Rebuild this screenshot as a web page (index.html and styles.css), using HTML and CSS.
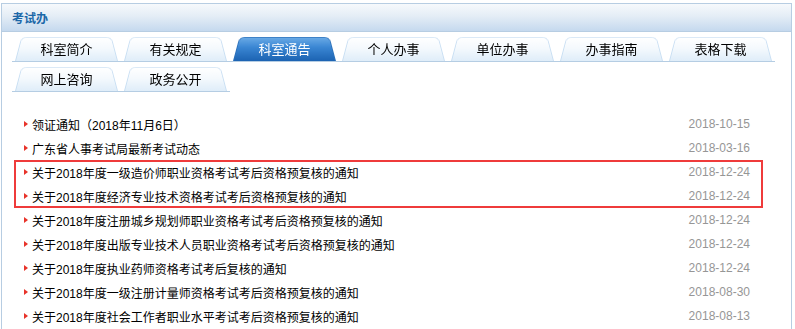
FILE: index.html
```html
<!DOCTYPE html>
<html lang="zh-CN">
<head>
    <meta charset="UTF-8">
    <meta name="viewport" content="width=device-width, initial-scale=1.0">
    <title>考试办</title>
    <link rel="stylesheet" href="styles.css">
</head>
<body>
    <div class="painel">
        <div class="painel-topo">
            <h2>考试办</h2>
        </div>
        <div class="painel-corpo">
            <div class="abas">
                <a class="aba" href="#">科室简介</a>
                <a class="aba" href="#">有关规定</a>
                <a class="aba ativa" href="#">科室通告</a>
                <a class="aba" href="#">个人办事</a>
                <a class="aba" href="#">单位办事</a>
                <a class="aba" href="#">办事指南</a>
                <a class="aba" href="#">表格下载</a>
            </div>
            <div class="abas">
                <a class="aba" href="#">网上咨询</a>
                <a class="aba" href="#">政务公开</a>
            </div>

            <ul class="lista">
                <li class="item"><a href="#">领证通知（2018年11月6日）</a><span>2018-10-15</span></li>
                <li class="item"><a href="#">广东省人事考试局最新考试动态</a><span>2018-03-16</span></li>
                <li class="destaque">
                    <ul class="lista">
                        <li class="item"><a href="#">关于2018年度一级造价师职业资格考试考后资格预复核的通知</a><span>2018-12-24</span></li>
                        <li class="item"><a href="#">关于2018年度经济专业技术资格考试考后资格预复核的通知</a><span>2018-12-24</span></li>
                    </ul>
                </li>
                <li class="item"><a href="#">关于2018年度注册城乡规划师职业资格考试考后资格预复核的通知</a><span>2018-12-24</span></li>
                <li class="item"><a href="#">关于2018年度出版专业技术人员职业资格考试考后资格预复核的通知</a><span>2018-12-24</span></li>
                <li class="item"><a href="#">关于2018年度执业药师资格考试考后复核的通知</a><span>2018-12-24</span></li>
                <li class="item"><a href="#">关于2018年度一级注册计量师资格考试考后资格预复核的通知</a><span>2018-08-30</span></li>
                <li class="item"><a href="#">关于2018年度社会工作者职业水平考试考后资格预复核的通知</a><span>2018-08-13</span></li>
            </ul>
        </div>
    </div>
</body>
</html>
```

FILE: styles.css
```css
/* Geral */
body {
    margin: 0;
    font-family: "Liberation Sans", "Noto Sans CJK SC", sans-serif;
    font-size: 12px;
    color: #000000;
    background: #ffffff;
}

a {
    color: inherit;
    text-decoration: none;
}

.painel {
    margin: 3px 3px 0 1px;
    border: 1px solid #b7cde2;
    border-bottom: none;
}

.painel-topo {
    height: 27px;
    padding-left: 10px;
    border-bottom: 1px solid #b7cde2;
    background: linear-gradient(#f6f9fc, #e4edf6 45%, #c5d9ee);
    display: flex;
    align-items: center;
}

.painel-topo h2 {
    margin: 0;
    font-size: 12px;
    font-weight: bold;
    color: #1c68a8;
}

.painel-corpo {
    padding: 5px 0 20px 10px;
}

/* Abas */
.abas {
    display: flex;
    gap: 6px;
    width: fit-content;
    padding: 0 3px;
    border-bottom: 1px solid #b5cde3;
}

.abas + .abas {
    margin-top: 5px;
}

.aba {
    position: relative;
    z-index: 0;
    width: 103px;
    height: 24px;
    line-height: 25px;
    text-align: center;
    font-size: 13px;
}

.aba::before {
    content: "";
    position: absolute;
    z-index: -1;
    top: -4px;
    left: 0;
    right: 0;
    bottom: 0;
    border: 1px solid #c9dff3;
    border-bottom: none;
    border-radius: 6px 6px 0 0;
    background: linear-gradient(#ffffff, #f4f9fd 50%, #dfedf9);
    transform: perspective(34px) rotateX(10deg);
    transform-origin: bottom;
}

.aba.ativa {
    color: #ffffff;
}

.aba.ativa::before {
    border-color: #2b70b9;
    background: linear-gradient(#6aaae6, #3a86d3 45%, #1c63b2);
}

/* Lista de avisos */
.lista {
    list-style: none;
    margin: 20px 30px 0 4px;
    padding: 0;
}

.lista .lista {
    margin: 0;
}

.item {
    display: flex;
    align-items: center;
    height: 24px;
    padding: 0 11px 0 8px;
}

.item::before {
    content: "";
    width: 0;
    height: 0;
    margin-right: 4px;
    border-left: 4px solid #e8332a;
    border-top: 3px solid transparent;
    border-bottom: 3px solid transparent;
}

.item a {
    flex: 1;
}

.item span {
    color: #969696;
}

/* Destaque em vermelho */
.destaque {
    margin: 0 -2px;
    padding: 0 2px;
    box-shadow: inset 0 0 0 2px #ef3b3b;
}
```
